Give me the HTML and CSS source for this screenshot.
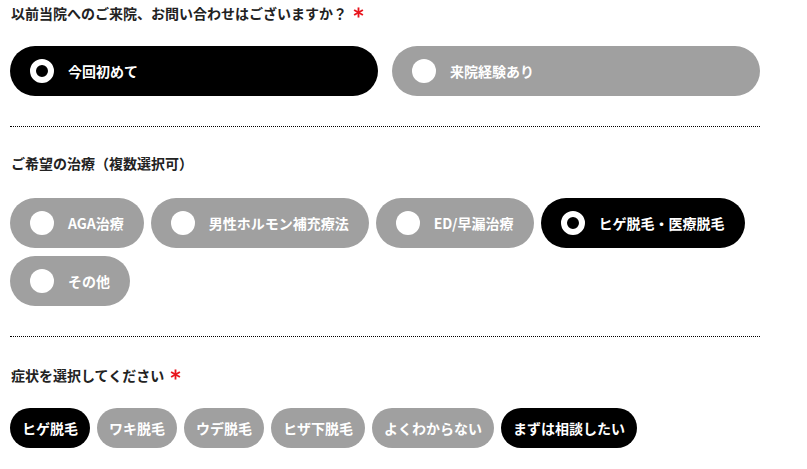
FILE: index.html
```html
<!DOCTYPE html>
<html lang="ja">
<head>
<meta charset="utf-8">
<link rel="stylesheet" href="styles.css">
</head>
<body>
<div class="form">
  <section class="field field-first">
    <h2 class="label">以前当院へのご来院、お問い合わせはございますか？<svg class="req" viewBox="0 0 12 12" width="11" height="11"><g stroke="#e8141c" stroke-width="2" stroke-linecap="butt"><line x1="6" y1="0.5" x2="6" y2="11.5"/><line x1="1.2" y1="3.2" x2="10.8" y2="8.8"/><line x1="1.2" y1="8.8" x2="10.8" y2="3.2"/></g></svg></h2>
    <div class="choices choices-wide">
      <div class="choice is-on"><span class="dot"></span><span class="text">今回初めて</span></div>
      <div class="choice"><span class="dot"></span><span class="text">来院経験あり</span></div>
    </div>
  </section>
  <section class="field">
    <h2 class="label">ご希望の治療（複数選択可）</h2>
    <div class="choices choices-wrap">
      <div class="choice"><span class="dot"></span><span class="text">AGA治療</span></div>
      <div class="choice"><span class="dot"></span><span class="text">男性ホルモン補充療法</span></div>
      <div class="choice"><span class="dot"></span><span class="text">ED/早漏治療</span></div>
      <div class="choice is-on"><span class="dot"></span><span class="text">ヒゲ脱毛・医療脱毛</span></div>
      <div class="choice"><span class="dot"></span><span class="text">その他</span></div>
    </div>
  </section>
  <section class="field field-last">
    <h2 class="label">症状を選択してください<svg class="req" viewBox="0 0 12 12" width="11" height="11"><g stroke="#e8141c" stroke-width="2" stroke-linecap="butt"><line x1="6" y1="0.5" x2="6" y2="11.5"/><line x1="1.2" y1="3.2" x2="10.8" y2="8.8"/><line x1="1.2" y1="8.8" x2="10.8" y2="3.2"/></g></svg></h2>
    <div class="pills">
      <span class="pill is-on">ヒゲ脱毛</span>
      <span class="pill">ワキ脱毛</span>
      <span class="pill">ウデ脱毛</span>
      <span class="pill">ヒザ下脱毛</span>
      <span class="pill">よくわからない</span>
      <span class="pill is-on">まずは相談したい</span>
    </div>
  </section>
</div>
</body>
</html>
```

FILE: styles.css
```css
* { box-sizing: border-box; }
html, body { margin: 0; padding: 0; background: #fff; }
body {
  font-family: "Noto Sans CJK JP", "Noto Sans", sans-serif;
  font-weight: 700;
  font-size: 14px;
  color: #222;
}
.form {
  width: 750px;
  margin-left: 10px;
}
.field {
  padding: 26px 0 30px;
  border-bottom: 1px dotted #000;
}
.field-first { padding-top: 3px; }
.field-last { padding-top: 28px; border-bottom: none; }
.label {
  margin: 0 0 25px 1px;
  font-size: 14px;
  line-height: 20px;
  font-weight: 700;
  display: flex;
  align-items: center;
}
.field-first .label, .field-last .label { margin-bottom: 23px; }
.req { margin-left: 6px; margin-top: -2px; }
.choices { display: flex; }
.choices-wide { gap: 14px; }
.choices-wide .choice { flex: 1; }
.choices-wrap { flex-wrap: wrap; gap: 8px 7px; }
.choice {
  height: 50px;
  border-radius: 25px;
  background: #a0a0a0;
  color: #fff;
  display: flex;
  align-items: center;
  gap: 14px;
  padding: 0 20px;
}
.choice.is-on { background: #000; }
.dot {
  width: 24px;
  height: 24px;
  border-radius: 50%;
  background: #fff;
  flex: none;
}
.choice.is-on .dot {
  background: #000;
  border: 6px solid #fff;
}
.text { line-height: 20px; white-space: nowrap; }
.pills { display: flex; flex-wrap: wrap; gap: 8px 7px; }
.pill {
  height: 40px;
  border-radius: 20px;
  padding: 0 12px;
  background: #a0a0a0;
  color: #fff;
  display: flex;
  align-items: center;
  line-height: 20px;
  white-space: nowrap;
}
.pill.is-on { background: #000; }
```
